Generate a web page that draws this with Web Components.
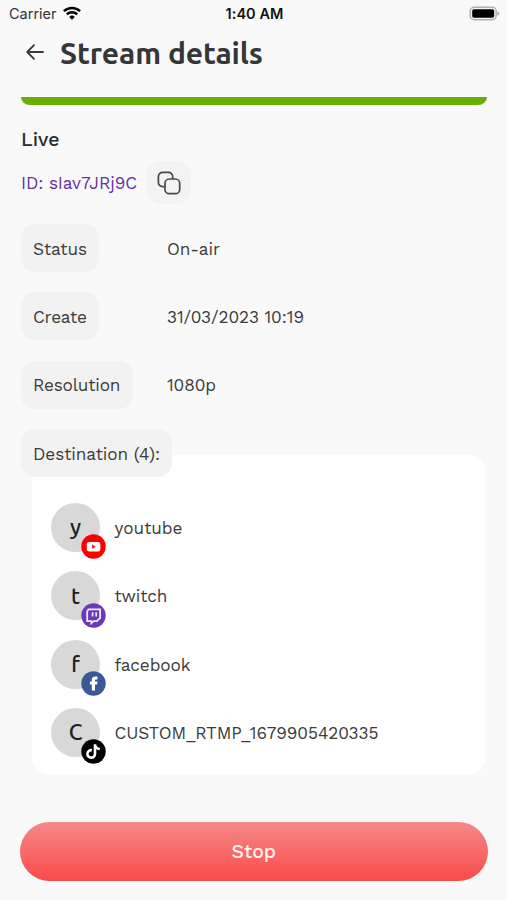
<!DOCTYPE html>
<html lang="en">
<head>
<meta charset="utf-8">
<title>Stream details</title>
<style>
html, body { margin: 0; height: 100%; background: #f9f9f9; }
body { font-family: "Work Sans", Inter, "Liberation Sans", sans-serif; font-size: 17.2px; color: #3b3b3b; overflow: hidden; }
</style>
</head>
<body>
<stream-screen></stream-screen>
<script>
const define = (name, html, connected) => {
  const template = document.createElement('template');
  template.innerHTML = html;
  customElements.define(name, class extends HTMLElement {
    constructor() {
      super();
      this.attachShadow({ mode: 'open' }).append(template.content.cloneNode(true));
    }
    connectedCallback() { if (connected) connected.call(this); }
  });
};

/* One line of text, tracked so that it fills the given measure. */
define('fit-text', `
<style>:host { display: block; white-space: nowrap; width: max-content; line-height: 24px; }</style><span><slot></slot></span>`,
function () {
  const want = parseFloat(this.getAttribute('measure'));
  const have = this.shadowRoot.querySelector('span').getBoundingClientRect().width;
  const n = this.textContent.length;
  if (want && have && n > 1) {
    const gap = (want - have) / (n - 1);
    this.style.letterSpacing = gap.toFixed(3) + 'px';
    this.style.marginRight = (-gap).toFixed(3) + 'px';
  }
});

define('status-bar', `
<style>
:host { display: grid; grid-template-columns: 1fr auto 1fr; align-items: center; height: 27px; padding: 0 7px 0 9px; color: #111; font: 14.5px Inter, "Liberation Sans", sans-serif; }
div { display: flex; align-items: center; gap: 6px; }
fit-text { line-height: 20px; }
.clock { font-weight: 600; }
.battery { justify-self: end; display: block; margin-top: -1px; }
.wifi { margin-top: -2px; }
</style>
<div><fit-text measure="47.5" style="color:#333">Carrier</fit-text>
<svg class="wifi" width="18" height="14" viewBox="0 0 18 14" fill="none" stroke="#050505" stroke-width="2.5"><path d="M.9 5.2a11.6 11.6 0 0 1 16.2 0"/><path d="M3.8 8.3a7.5 7.5 0 0 1 10.4 0"/><path d="M9 13.7 6.2 10.9a4.1 4.1 0 0 1 5.6 0z" fill="#050505" stroke="none"/></svg></div>
<fit-text class="clock" measure="58">1:40 AM</fit-text>
<svg class="battery" width="31" height="15" viewBox="0 0 31 15"><rect x="1.2" y="1.2" width="26" height="12.6" rx="4" fill="#f4f4f4" stroke="#b0b0b0" stroke-width="1.4"/><rect x="3.2" y="3.2" width="22" height="8.6" rx="1.8"/><path d="M28.5 5.3Q30.5 6 30.5 7.5T28.5 9.7z" fill="#aaa"/></svg>`);

define('page-title', `
<style>
:host { display: flex; align-items: center; height: 52px; padding-left: 26px; gap: 16px; box-sizing: border-box; }
svg { display: block; margin-top: -2px; }
fit-text { font: 700 30px/40px Ubuntu, "Noto Sans", "Open Sans", sans-serif; color: #363638; }
</style>
<svg width="18" height="16" viewBox="0 0 18 16" fill="none" stroke="#3b3b3b" stroke-width="1.8" stroke-linecap="round" stroke-linejoin="round"><path d="M17 8H1.2M8 1.2 1.2 8 8 14.8"/></svg>
<fit-text measure="203"><slot></slot></fit-text>`,
function () {
  const title = this.shadowRoot.querySelector('fit-text');
  title.textContent = this.textContent;
  title.connectedCallback();
});

define('label-pill', `
<style>:host { display: flex; align-items: center; width: max-content; height: 48px; padding: 1px 12px 0 12px; border-radius: 14px; background: #f2f2f2; box-sizing: border-box; }</style><slot></slot>`);

define('detail-row', `
<style>:host { display: grid; grid-template-columns: 146px 1fr; align-items: center; height: 48px; } .value { padding-top: 1px; }</style>
<slot name="label"></slot><div class="value"><slot></slot></div>`);

define('copy-button', `
<style>:host { display: grid; place-items: center; width: 44px; height: 43px; border-radius: 14px; background: #f3f3f3; }</style>
<svg width="24" height="24" viewBox="0 0 24 24" fill="none" stroke="#484848" stroke-width="1.7"><rect x="8" y="8" width="14.7" height="14.7" rx="4.3"/><path d="M7.8 15.7H5.6a4.2 4.2 0 0 1-4.2-4.2V5.6a4.2 4.2 0 0 1 4.2-4.2h5.9a4.2 4.2 0 0 1 4.2 4.2V7.8"/></svg>`);

const badges = {
  youtube: '<circle cx="12.5" cy="12.5" r="12.2" fill="#f00"/><rect x="5.8" y="7.9" width="13.5" height="9.6" rx="2.2" fill="#fff"/><path d="m11.2 10.6 3.5 2.1-3.5 2.1z" fill="#f00"/>',
  twitch: '<circle cx="12.5" cy="12.5" r="12.2" fill="#673ab7"/><path d="M7.5 6.4h11.6v8.5l-3.3 3.2h-3.1l-2.4 2.1v-2.1H6.2V8.5z" fill="none" stroke="#f3e9ff" stroke-width="1.8"/><path d="M11.6 9.2v4.2M15.2 9.2v4.2" stroke="#f3e9ff" stroke-width="1.7"/>',
  facebook: '<circle cx="12.5" cy="12.5" r="12.2" fill="#3b5998"/><path d="M10.8 19.6v-6.1H8.9v-2.9h1.9V9.1c0-2.4 1.3-3.6 3.6-3.6h2v2.9h-1.2c-.9 0-1.2.4-1.2 1.1v1.1h2.5l-.4 2.9H14v6.1z" fill="#fff"/>',
  tiktok: '<circle cx="12.5" cy="12.5" r="12.2" fill="#000"/><path d="M14 5.2v9.6a3.8 3.8 0 1 1-3.2-3.6M14 5.6c.3 2.7 1.9 4.2 4.8 4.4" fill="none" stroke="#fff" stroke-width="2.6"/>'
};
define('destination-item', `
<style>
:host { display: flex; align-items: center; gap: 14.5px; height: 49px; }
.avatar { position: relative; display: grid; place-items: center; width: 49px; height: 49px; border-radius: 50%; background: #d8d8d8; color: #202020; font: 500 22px/28px Ubuntu, "Noto Sans", sans-serif; }
svg { position: absolute; left: 30px; top: 31.5px; }
.name { padding-top: 1px; }
</style>
<div class="avatar"><span></span><svg width="25" height="25" viewBox="0 0 25 25"></svg></div><div class="name"><slot></slot></div>`,
function () {
  this.shadowRoot.querySelector('span').textContent = this.getAttribute('initial');
  this.shadowRoot.querySelector('svg').innerHTML = badges[this.getAttribute('service')];
});

define('destination-card', `
<style>:host { display: flex; flex-direction: column; gap: 19.4px; box-sizing: border-box; height: 320.5px; padding: 48px 19px 0; border-radius: 18px; background: #fff; }</style><slot></slot>`);

define('stop-button', `
<style>:host { display: grid; place-items: center; height: 59px; padding-top: 1px; box-sizing: border-box; border-radius: 30px; color: #fff2ef; font-size: 19.5px; font-weight: 500; background: linear-gradient(#f48a88, #fb4a4a); }</style><slot></slot>`);

define('stream-screen', `
<style>
:host { display: block; height: 900px; overflow: hidden; background: #f9f9f9; }
main { padding: 0 20px 0 21px; }
.bar { margin-top: 18px; height: 8px; border-radius: 0 0 9px 9px / 0 0 8px 8px; background: #6aae04; }
.live { margin-top: 23px; font-size: 19.5px; font-weight: 500; color: #2b2b2b; }
.id { display: flex; align-items: center; gap: 10px; margin-top: 9px; color: #6330ab; }
.rows { display: flex; flex-direction: column; gap: 20.4px; margin-top: 20px; }
.dest { margin-top: 20.5px; }
.dest label-pill { position: relative; z-index: 1; }
destination-card { margin: -22.5px 1px 0 11px; }
stop-button { margin: 46.5px -.5px 0 -1px; }
</style>
<status-bar></status-bar>
<page-title>Stream details</page-title>
<main>
  <div class="bar"></div>
  <fit-text class="live" measure="38.5">Live</fit-text>
  <div class="id"><fit-text measure="116">ID: sIav7JRj9C</fit-text><copy-button></copy-button></div>
  <div class="rows">
    <detail-row><label-pill slot="label"><fit-text measure="54">Status</fit-text></label-pill><fit-text measure="53">On-air</fit-text></detail-row>
    <detail-row><label-pill slot="label"><fit-text measure="54">Create</fit-text></label-pill><fit-text measure="137">31/03/2023 10:19</fit-text></detail-row>
    <detail-row><label-pill slot="label"><fit-text measure="87.5">Resolution</fit-text></label-pill><fit-text measure="49">1080p</fit-text></detail-row>
  </div>
  <section class="dest">
    <label-pill><fit-text measure="127">Destination (4):</fit-text></label-pill>
    <destination-card>
      <destination-item initial="y" service="youtube"><fit-text measure="68">youtube</fit-text></destination-item>
      <destination-item initial="t" service="twitch"><fit-text measure="53">twitch</fit-text></destination-item>
      <destination-item initial="f" service="facebook"><fit-text measure="76">facebook</fit-text></destination-item>
      <destination-item initial="C" service="tiktok"><fit-text measure="264">CUSTOM_RTMP_1679905420335</fit-text></destination-item>
    </destination-card>
  </section>
  <stop-button><fit-text measure="44.5">Stop</fit-text></stop-button>
</main>`);
</script>
</body>
</html>
